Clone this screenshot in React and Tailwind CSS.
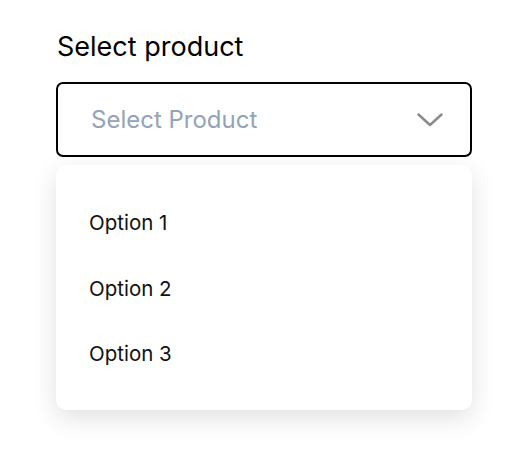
import React from "react";

export default function App() {
  return (
    <div
      className="w-[532px] h-[476px] bg-white pt-[30px] px-[56px]"
      style={{ fontFamily: "Inter, 'Noto Sans', sans-serif" }}
    >
      <div className="text-[27px] leading-[33px] text-black mb-[19px] pl-px">Select product</div>
      <div className="h-[75px] w-[416px] border-2 border-black rounded-[7px] flex items-center justify-between pl-[33px] pr-[27px]">
        <span className="text-[24px] leading-[29px] text-[#94a3b8]">Select Product</span>
        <svg width="26" height="14" viewBox="0 0 26 14" fill="none">
          <path d="M1.5 1.5 L13 12 L24.5 1.5" stroke="#8a8a8a" strokeWidth="2.4" strokeLinecap="round" strokeLinejoin="round" />
        </svg>
      </div>
      <div className="mt-[8px] w-[416px] bg-white rounded-[10px] shadow-[0_8px_26px_rgba(0,0,0,0.12)] pt-[26px] pb-[22px]">
        {["Option 1", "Option 2", "Option 3"].map((o) => (
          <div key={o} className="h-[65.5px] flex items-center pl-[33px] text-[20.5px] text-[#111]">
            {o}
          </div>
        ))}
      </div>
    </div>
  );
}
